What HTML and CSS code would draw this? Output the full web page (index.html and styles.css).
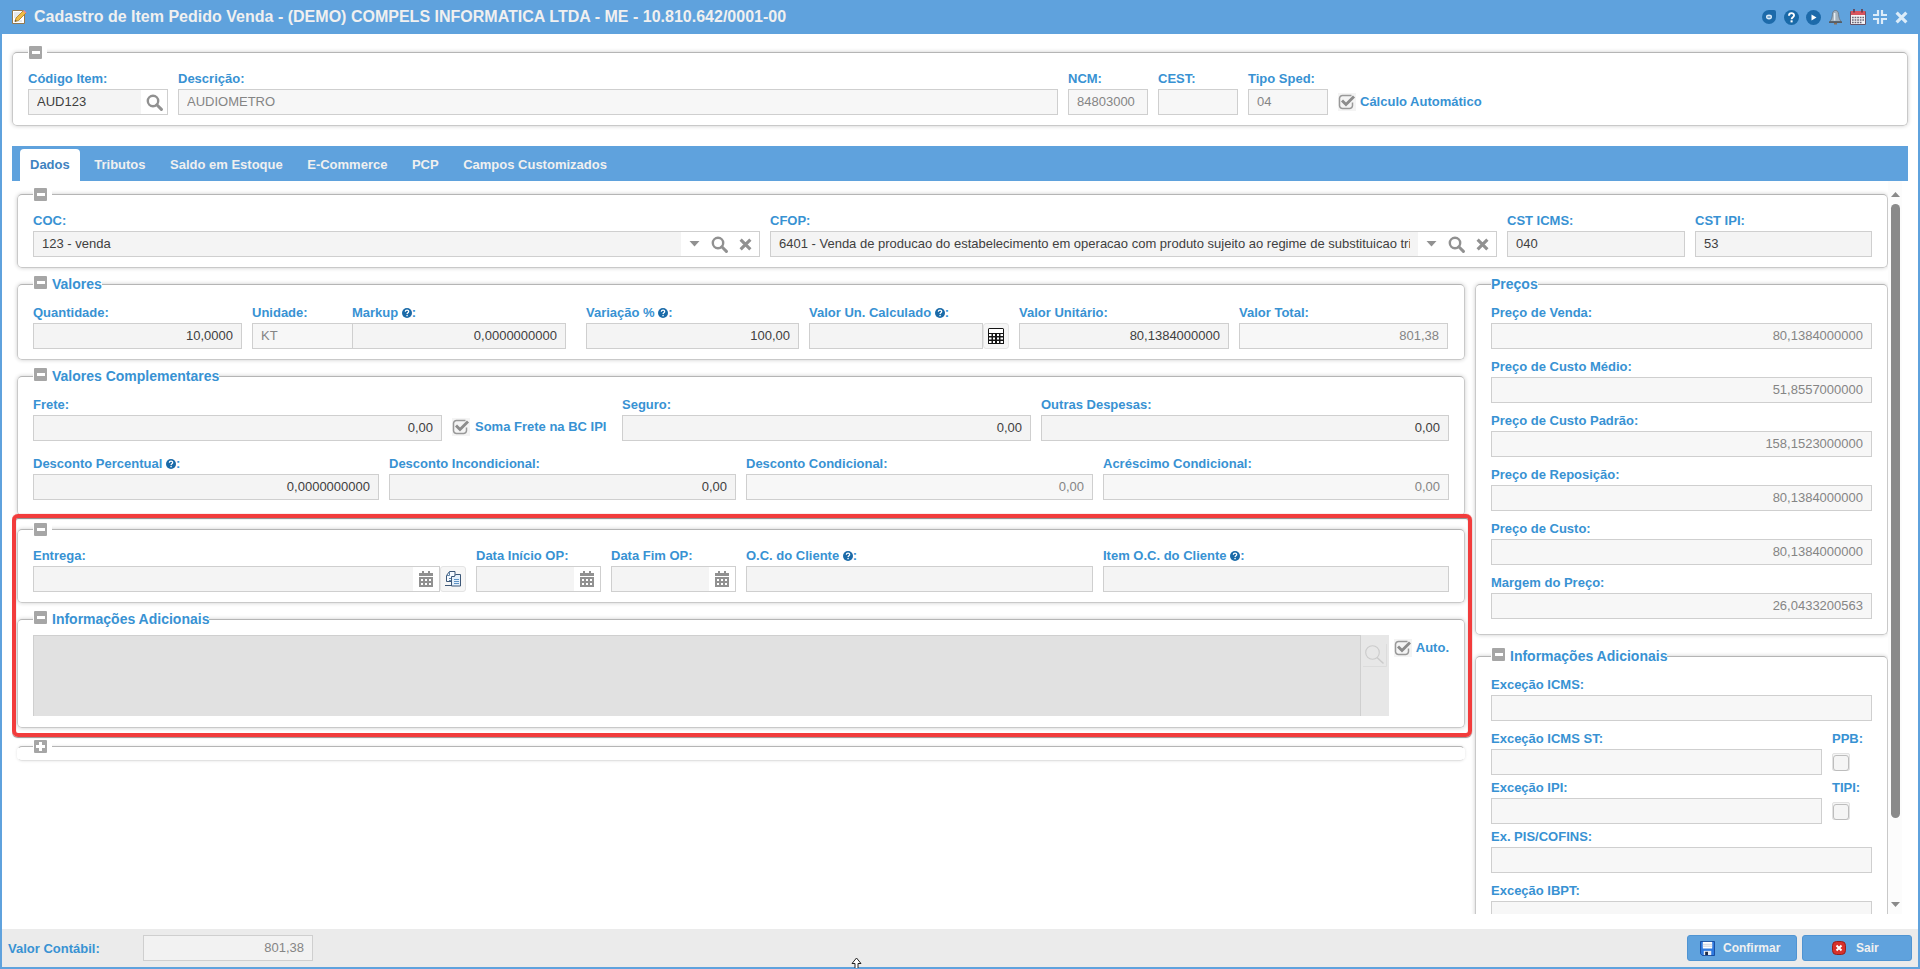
FILE: index.html
```html
<!DOCTYPE html>
<html lang="pt-BR">
<head>
<meta charset="utf-8">
<title>Cadastro de Item Pedido Venda</title>
<link rel="stylesheet" href="styles.css">
</head>
<body>
<svg class="sprite" width="0" height="0">
  <symbol id="search" viewBox="0 0 17 17"><circle cx="7" cy="7" r="5.2" fill="none" stroke="currentColor" stroke-width="2.4"/><path d="M10.8 10.8l4.6 4.6" stroke="currentColor" stroke-width="3" stroke-linecap="round"/></symbol>
  <symbol id="cross" viewBox="0 0 12 12"><path d="M1.500 1.500l9 9M10.500 1.500l-9 9" stroke="currentColor" stroke-width="2.9"/></symbol>
  <symbol id="caret" viewBox="0 0 10 6"><path d="M0 0h10L5 5.5z" fill="currentColor"/></symbol>
  <symbol id="date" viewBox="0 0 14 16"><path d="M3 0h2v2h4V0h2v2h3v3H0V2h3zM0 6h14v10H0z" fill="currentColor"/><path d="M2 8h2v2H2zM6 8h2v2H6zM10 8h2v2h-2zM2 12h2v2H2zM6 12h2v2H6zM10 12h2v2h-2z" fill="#fff"/></symbol>
  <symbol id="check" viewBox="0 0 18 18"><path d="M0 0h18v18H0z" fill="#f4f4f4"/><path d="M13.5 2.5h-9a3 3 0 0 0-3 3v7a3 3 0 0 0 3 3h7a3 3 0 0 0 3-3V9.500" fill="none" stroke="#999" stroke-width="1.5"/><path d="M4 7.500l4 4L16 3.500" fill="none" stroke="#8c8c8c" stroke-width="2.9"/></symbol>
  <symbol id="help" viewBox="0 0 16 16"><circle cx="8" cy="8" r="8" fill="#1a6aa8"/><path d="M5.300 6c0-3.600 5.600-3.400 5.400-.2C10.600 7.700 8.200 7.600 8.100 9.800" fill="none" stroke="#fff" stroke-width="2"/><path d="M7 11h2.200v2.200H7z" fill="#fff"/></symbol>
  <symbol id="calc" viewBox="0 0 16 16"><path d="M0 1.500A1.500 1.500 0 0 1 1.500 0h13A1.500 1.500 0 0 1 16 1.500V16H0z" fill="#151515"/><path d="M1 1h14v4H1zM1 6h2.500v2H1zM5 6h2v2H5zM9 6h2v2H9zM12.500 6H15v2h-2.500zM1 9.500h2.500v2H1zM5 9.500h2v2H5zM9 9.500h2v2H9zM12.500 9.500H15v2h-2.500zM1 13h2.500v2H1zM5 13h2v2H5zM9 13h2v2H9zM12.500 13H15v2h-2.500z" fill="#fff"/></symbol>
  <symbol id="docs" viewBox="0 0 16 16"><path d="M4.500.5H10v10H1.500V4.500z" fill="#f5faff" stroke="#3d5878"/><path d="M0 14.500h7" stroke="#3d5878"/><path d="M4.500.5v4h-3M4 7.500h3M4 9.500h3" fill="none" stroke="#5f83a8"/><path d="M6.500 5.500v9.500h9V3.500h-5l-1 2z" fill="#e4f0fb" stroke="#3d5878"/><path d="M9 8.500h5M9 10.500h5M9 12.500h5" stroke="#5f93c4"/></symbol>
</svg>

<div class="window">
  <header class="titlebar">
    <svg class="edit" width="16" height="16" viewBox="0 0 16 16"><path d="M1.500 1.500h10l2 2v11h-12z" fill="#fff" stroke="#92784f"/><path d="M3 4h6M3 6h5M3 8h3M3 12h8" stroke="#ccd3da"/><path d="M4 12.500l1-3.500 7.500-7.500 2.500 2.500-7.500 7.500z" fill="#f0bd45" stroke="#a87820" stroke-width=".8"/><path d="M12.500 1.500l2.500 2.500" stroke="#e4889a" stroke-width="1.600"/><path d="M4 12.500l.5-1.600 1.100 1.100z" fill="#333"/></svg>
    <h1>Cadastro de Item Pedido Venda - (DEMO) COMPELS INFORMATICA LTDA - ME - 10.810.642/0001-00</h1>
    <div class="tools">
      <svg width="14" height="14" viewBox="0 0 14 14"><path d="M7 0h5a2 2 0 0 1 2 2v5A7 7 0 1 1 7 0z" fill="#1d6aaa"/><ellipse cx="7" cy="7" rx="3" ry="2.400" fill="#dcecf9"/><path d="M5.500 7h3" stroke="#1d6aaa"/></svg>
      <svg class="t-help" width="15" height="15"><use href="#help"/></svg>
      <svg class="t-play" width="15" height="15" viewBox="0 0 15 15"><circle cx="7.500" cy="7.500" r="7.500" fill="#1d6aaa"/><path d="M5.500 4.500l5 3-5 3z" fill="#fff"/></svg>
      <svg class="t-bell" width="13" height="15" viewBox="0 0 13 15"><path d="M6.500.5C4.500.5 3.600 2 3.400 4.500 3.200 8 2.300 9.500 1 11.500h11C10.700 9.500 9.800 8 9.600 4.500 9.400 2 8.500.5 6.500.5z" fill="#a3b3c0" stroke="#66727d" stroke-width=".8"/><path d="M5.600 3v7.500" stroke="#e8eff4" stroke-width="1.500"/><path d="M0 11.300h13v1.700H0z" fill="#555c64"/><path d="M5 13h3v1.500H5z" fill="#8e6f54"/></svg>
      <svg class="t-cal" width="16" height="16" viewBox="0 0 16 16"><path d="M.5 2.500h15v13H.5z" fill="#f4f3f6" stroke="#665266"/><path d="M1 2h14v4H1z" fill="#d9545e"/><path d="M4 0v3.500M12 0v3.500" stroke="#5d3444" stroke-width="1.500"/><path d="M2 8.500h12M2 11h12M2 13.500h10" stroke="#6b6677" stroke-width="1.500" stroke-dasharray="1.700 .9"/></svg>
      <svg class="t-min" width="14" height="14" viewBox="0 0 14 14"><path d="M5 0v5H0M9 0v5h5M0 9h5v5M14 9H9v5" fill="none" stroke="#dcecf9" stroke-width="2.200"/></svg>
      <svg class="t-close" width="13" height="13"><use href="#cross"/></svg>
    </div>
  </header>

  <main class="content">
    <fieldset class="fs">
      <legend><i class="tog"></i></legend>
      <div class="row">
        <div class="field w140"><label>Código Item:</label><div class="inp"><span>AUD123</span><b class="trg"><svg width="17" height="17"><use href="#search"/></svg></b></div></div>
        <div class="field w880"><label>Descrição:</label><div class="inp ro"><span>AUDIOMETRO</span></div></div>
        <div class="field w80"><label>NCM:</label><div class="inp ro"><span>84803000</span></div></div>
        <div class="field w80"><label>CEST:</label><div class="inp ro"></div></div>
        <div class="field w80"><label>Tipo Sped:</label><div class="inp ro"><span>04</span></div></div>
        <div class="chk calcauto"><svg width="18" height="18"><use href="#check"/></svg><label>Cálculo Automático</label></div>
      </div>
    </fieldset>

    <nav class="tabs"><a class="on">Dados</a><a>Tributos</a><a>Saldo em Estoque</a><a>E-Commerce</a><a>PCP</a><a>Campos Customizados</a></nav>

    <div class="scroll">
      <div class="inner">
        <fieldset class="fs">
          <legend><i class="tog"></i></legend>
          <div class="row">
            <div class="field w727"><label>COC:</label><div class="inp"><span>123 - venda</span><b class="trg wide"><svg class="car" width="11" height="6"><use href="#caret"/></svg><svg width="17" height="17"><use href="#search"/></svg><svg width="13" height="13"><use href="#cross"/></svg></b></div></div>
            <div class="field w727"><label>CFOP:</label><div class="inp"><span>6401 - Venda de producao do estabelecimento em operacao com produto sujeito ao regime de substituicao tri</span><b class="trg wide"><svg class="car" width="11" height="6"><use href="#caret"/></svg><svg width="17" height="17"><use href="#search"/></svg><svg width="13" height="13"><use href="#cross"/></svg></b></div></div>
            <div class="field w178"><label>CST ICMS:</label><div class="inp"><span>040</span></div></div>
            <div class="field grow"><label>CST IPI:</label><div class="inp"><span>53</span></div></div>
          </div>
        </fieldset>

        <div class="cols">
          <section class="left">
            <fieldset class="fs named">
              <legend><i class="tog"></i>Valores</legend>
              <div class="row">
                <div class="field w209"><label>Quantidade:</label><div class="inp num"><span>10,0000</span></div></div>
                <div class="field pair w314">
                  <div class="field w100"><label>Unidade:</label><div class="inp ro"><span>KT</span></div></div>
                  <div class="field grow"><label>Markup <svg class="q"><use href="#help"/></svg>:</label><div class="inp num"><span>0,0000000000</span></div></div>
                </div>
                <div class="field w213 shift"><label>Variação % <svg class="q"><use href="#help"/></svg>:</label><div class="inp num"><span>100,00</span></div></div>
                <div class="field w200"><label>Valor Un. Calculado <svg class="q"><use href="#help"/></svg>:</label><div class="withbtn"><div class="inp"></div><button class="sq"><svg width="16" height="16"><use href="#calc"/></svg></button></div></div>
                <div class="field w210"><label>Valor Unitário:</label><div class="inp num"><span>80,1384000000</span></div></div>
                <div class="field w209"><label>Valor Total:</label><div class="inp ro num"><span>801,38</span></div></div>
              </div>
            </fieldset>

            <fieldset class="fs named tall">
              <legend><i class="tog"></i>Valores Complementares</legend>
              <div class="row">
                <div class="field w409"><label>Frete:</label><div class="inp num"><span>0,00</span></div></div>
                <div class="chk frete"><svg width="18" height="18"><use href="#check"/></svg><label>Soma Frete na BC IPI</label></div>
                <div class="field w409"><label>Seguro:</label><div class="inp num"><span>0,00</span></div></div>
                <div class="field grow"><label>Outras Despesas:</label><div class="inp num"><span>0,00</span></div></div>
              </div>
              <div class="row second">
                <div class="field w346"><label>Desconto Percentual <svg class="q"><use href="#help"/></svg>:</label><div class="inp num"><span>0,0000000000</span></div></div>
                <div class="field w347"><label>Desconto Incondicional:</label><div class="inp num"><span>0,00</span></div></div>
                <div class="field w347"><label>Desconto Condicional:</label><div class="inp ro num"><span>0,00</span></div></div>
                <div class="field grow"><label>Acréscimo Condicional:</label><div class="inp ro num"><span>0,00</span></div></div>
              </div>
            </fieldset>

            <fieldset class="fs delivery">
              <legend><i class="tog"></i></legend>
              <div class="row">
                <div class="field w433"><label>Entrega:</label><div class="withbtn"><div class="inp"><b class="trg"><svg width="14" height="16"><use href="#date"/></svg></b></div><button class="sq"><svg width="16" height="16"><use href="#docs"/></svg></button></div></div>
                <div class="field w125"><label>Data Início OP:</label><div class="inp"><b class="trg"><svg width="14" height="16"><use href="#date"/></svg></b></div></div>
                <div class="field w125"><label>Data Fim OP:</label><div class="inp"><b class="trg"><svg width="14" height="16"><use href="#date"/></svg></b></div></div>
                <div class="field w347"><label>O.C. do Cliente <svg class="q"><use href="#help"/></svg>:</label><div class="inp"></div></div>
                <div class="field grow"><label>Item O.C. do Cliente <svg class="q"><use href="#help"/></svg>:</label><div class="inp"></div></div>
              </div>
            </fieldset>

            <fieldset class="fs notes">
              <legend><i class="tog up"></i>Informações Adicionais</legend>
              <div class="noterow">
                <div class="area"></div>
                <div class="areabtn"><svg width="24" height="24" viewBox="0 0 24 24"><path d="M0 23.500h23.500V1" fill="none" stroke="#dcdcdc"/><circle cx="9.500" cy="9.500" r="6.800" fill="none" stroke="#cbcbcb" stroke-width="1.100"/><path d="M14 14.500l6.500 6" stroke="#cbcbcb" stroke-width="1.500"/></svg></div>
                <div class="chk auto"><svg width="18" height="18"><use href="#check"/></svg><label>Auto.</label></div>
              </div>
            </fieldset>

            <fieldset class="fs closed"><legend><i class="tog plus"></i></legend></fieldset>
            <div class="highlight"></div>
          </section>

          <section class="right">
            <fieldset class="fs named prices">
              <legend class="plain">Preços</legend>
              <div class="stack">
                <div class="field"><label>Preço de Venda:</label><div class="inp ro num"><span>80,1384000000</span></div></div>
                <div class="field"><label>Preço de Custo Médio:</label><div class="inp ro num"><span>51,8557000000</span></div></div>
                <div class="field"><label>Preço de Custo Padrão:</label><div class="inp ro num"><span>158,1523000000</span></div></div>
                <div class="field"><label>Preço de Reposição:</label><div class="inp ro num"><span>80,1384000000</span></div></div>
                <div class="field"><label>Preço de Custo:</label><div class="inp ro num"><span>80,1384000000</span></div></div>
                <div class="field"><label>Margem do Preço:</label><div class="inp ro num"><span>26,0433200563</span></div></div>
              </div>
            </fieldset>
            <fieldset class="fs named extra">
              <legend><i class="tog"></i>Informações Adicionais</legend>
              <div class="stack">
                <div class="field"><label>Exceção ICMS:</label><div class="inp ro"></div></div>
                <div class="row">
                  <div class="field w331"><label>Exceção ICMS ST:</label><div class="inp ro"></div></div>
                  <div class="field"><label>PPB:</label><i class="box"></i></div>
                </div>
                <div class="row near">
                  <div class="field w331"><label>Exceção IPI:</label><div class="inp ro"></div></div>
                  <div class="field"><label>TIPI:</label><i class="box"></i></div>
                </div>
                <div class="field near"><label>Ex. PIS/COFINS:</label><div class="inp ro"></div></div>
                <div class="field"><label>Exceção IBPT:</label><div class="inp ro"></div></div>
              </div>
            </fieldset>
          </section>
        </div>
      </div>
      <div class="bar">
        <svg width="9" height="5" viewBox="0 0 9 5"><path d="M0 5h9L4.500 0z" fill="#8a8a8a"/></svg>
        <div class="thumb"></div>
        <svg class="down" width="9" height="5" viewBox="0 0 9 5"><path d="M0 0h9L4.500 5z" fill="#8a8a8a"/></svg>
      </div>
    </div>
  </main>

  <footer class="foot">
    <label>Valor Contábil:</label>
    <div class="inp ro num total"><span>801,38</span></div>
    <button class="btn confirm"><svg width="15" height="15" viewBox="0 0 16 16"><path d="M.5.5h15v15h-13l-2-2z" fill="#2f7ae0" stroke="#164a9c"/><path d="M3 1h10v7H3z" fill="#fff"/><path d="M3 3.500h10M3 5.500h10" stroke="#c6cedb"/><path d="M4 10.500h8V15H4z" fill="#e9eef5"/><path d="M5.500 11.500h3V15h-3z" fill="#1c2b45"/></svg>Confirmar</button>
    <button class="btn exit"><svg width="14" height="14" viewBox="0 0 14 14"><rect x=".5" y=".5" width="13" height="13" rx="4" fill="#d9312a" stroke="#96201c"/><path d="M4.500 4.500l5 5M9.500 4.500l-5 5" stroke="#fff" stroke-width="2"/></svg>Sair</button>
  </footer>
  <svg class="cursor" width="11" height="11" viewBox="0 0 11 11"><path d="M5.500 1L10 6.500H7V12H4V6.500H1z" fill="#fff" stroke="#222"/></svg>
</div>
</body>
</html>
```

FILE: styles.css
```css
* { box-sizing: border-box; }
body { margin: 0; font: 13px "Liberation Sans", Arial, sans-serif; background: #fff; overflow: hidden; }
.sprite { position: absolute; }
svg { display: block; flex: none; }
label { font-weight: bold; color: #3892d3; white-space: nowrap; }
button { font: bold 12px "Liberation Sans", Arial, sans-serif; padding: 0; }

.window { position: relative; width: 1920px; height: 969px; display: flex; flex-direction: column; border: 2px solid #5fa2dd; border-top: 0; }

.titlebar { height: 34px; flex: none; margin: 0 -2px; padding: 0 12px 0 11px; display: flex; align-items: center; background: #5fa2dd; }
.titlebar h1 { margin: 0 0 0 7px; font-size: 16px; line-height: 33px; height: 34px; letter-spacing: .01px; color: #f0f0f0; white-space: nowrap; }
.tools { margin-left: auto; display: flex; align-items: center; color: #dcecf9; }
.t-help { margin-left: 8px; }
.t-play { margin-left: 7px; }
.t-bell { margin-left: 8px; }
.t-cal { margin-left: 8px; }
.t-min { margin-left: 7px; }
.t-close { margin-left: 8px; }

.content { flex: 1; min-height: 0; padding: 10px 10px 0; display: flex; flex-direction: column; }

.fs { margin: 0; min-width: 0; padding: 10px 15px; border: 1px solid #c9c9c9; border-top-color: #b5b5b5; border-radius: 5px; box-shadow: 0 0 4px rgba(0, 0, 0, .2); background: #fff; }
.fs.named { padding-top: 12px; }
.fs.tall, .fs.prices { padding-bottom: 15px; }
legend { display: flex; align-items: center; height: 17px; padding: 0 0 0 1px; font-size: 14px; font-weight: bold; line-height: 17px; color: #3892d3; background: #fff; white-space: nowrap; }
legend.plain { padding: 0; }
.tog { width: 13px; height: 13px; margin-right: 5px; border-radius: 1px; background: linear-gradient(#fff, #fff) center / 8px 3px no-repeat #a6a6a6; }
.named .tog, .tog.up { margin-top: -4px; }
.tog.plus { background: linear-gradient(#fff, #fff) center / 9px 3px no-repeat, linear-gradient(#fff, #fff) center / 3px 9px no-repeat #a6a6a6; }

.row { display: flex; gap: 10px; }
.row.second { margin-top: 15px; }
.stack { display: flex; flex-direction: column; gap: 10px; }
.near { margin-top: -5px; }
.field { display: flex; flex-direction: column; flex: none; }
.field.grow { flex: 1; min-width: 0; }
.field > label { height: 18px; padding-bottom: 3px; line-height: 15px; display: flex; align-items: center; white-space: pre; }
.field.pair { flex-direction: row; }
.field.pair .grow { margin-left: -1px; }
.q { width: 10px; height: 10px; }
.inp { height: 26px; display: flex; border: 1px solid #cfcfcf; background: #f4f4f4; color: #404040; line-height: 23px; overflow: hidden; }
.inp span { flex: 1; min-width: 0; margin: 0 8px; overflow: hidden; white-space: nowrap; }
.inp.ro { background: #f7f7f7; color: #858585; }
.inp.num { text-align: right; }
.trg { width: 26px; margin-left: auto; flex: none; display: flex; align-items: center; justify-content: center; background: #fff; color: #919191; }
.trg.wide { width: 78px; justify-content: flex-start; gap: 10px; padding-left: 8px; }
.trg.wide .car { margin-right: 1px; }
.trg.wide svg:last-child { margin-left: 1px; }
.withbtn { display: flex; }
.withbtn .inp { flex: 1; }
.sq { width: 26px; height: 26px; display: flex; align-items: center; justify-content: center; border: 1px solid #e4e4e4; border-radius: 3px; background: #f6f6f6; }
.chk { display: flex; gap: 4px; height: 18px; flex: none; }
.chk label { line-height: 18px; }
.calcauto { margin-top: 22px; }
.frete { margin-top: 21px; width: 160px; gap: 5px; }
.box { width: 18px; height: 18px; margin-top: 4px; border: 1px solid #e2e2e2; border-radius: 2px; background: #f5f5f5; display: flex; }
.box::before { content: ""; margin: 1px 0; width: 14px; height: 14px; border: 1px solid #bdbdbd; border-radius: 3px; }

.w80 { width: 80px; }
.w100 { width: 101px; }
.w125 { width: 125px; }
.w140 { width: 140px; }
.w178 { width: 178px; }
.w200 { width: 200px; }
.w209 { width: 209px; }
.w210 { width: 210px; }
.w213 { width: 213px; }
.w314 { width: 314px; }
.w331 { width: 331px; }
.w346 { width: 346px; }
.w347 { width: 347px; }
.w409 { width: 409px; }
.w433 { width: 433px; }
.w727 { width: 727px; }
.w880 { width: 880px; }
.shift { margin-left: 10px; }

.tabs { height: 35px; flex: none; margin-top: 20px; padding: 3px 8px 0; display: flex; gap: 4.5px; background: #5fa2dd; }
.tabs a { padding: 0 10px; line-height: 31px; font-weight: bold; color: #f0f0f0; border-radius: 4px 4px 0 0; }
.tabs .on { background: #fff; color: #3f83c0; }

.scroll { display: flex; height: 733px; flex: none; overflow: hidden; }
.inner { width: 1876px; padding: 5px 0 0 5px; }
.cols { display: flex; gap: 10px; margin-top: 8px; }
.left { position: relative; width: 1448px; display: flex; flex-direction: column; gap: 8px; }
.delivery { margin-top: -3px; }
.fs.notes { padding: 7px 15px 11px; }
.noterow { display: flex; }
.area { width: 1328px; height: 81px; border: 1px solid #cfcfcf; border-bottom: 0; background: #e1e1e1; }
.areabtn { width: 28px; height: 81px; padding: 8px 0 0 2px; background: #e7e7e7; }
.chk.auto { margin: 4px 0 0 5px; }
.fs.closed { margin-top: 2px; padding: 0; height: 23px; border-left-color: transparent; border-right-color: transparent; border-bottom-color: #e2e2e2; box-shadow: 0 0 3px rgba(0, 0, 0, .12); }
.closed legend { margin-left: 15px; }
.highlight { position: absolute; left: -5px; top: 238px; width: 1460px; height: 223px; border: 4px solid #f23c3c; border-radius: 6px; box-shadow: 0 0 1px 0 #c55, inset 0 1px 1px #888, 0 1px 1px #999; }
.right { flex: 1; }
.extra { margin-top: 13px; }

.bar { width: 14px; padding: 11px 0 0; display: flex; flex-direction: column; align-items: center; background: #fcfcfc; }
.thumb { width: 9px; height: 614px; margin-top: 7px; border-radius: 5px; background: #8a8a8a; }
.down { margin-top: 84px; }

.foot { height: 38px; flex: none; padding: 0 6px; display: flex; align-items: center; background: #ebebeb; }
.foot .total { width: 170px; margin-left: 44px; background: #f2f2f2; }
.foot > label { width: 91px; }
.btn { width: 110px; height: 26px; display: flex; align-items: center; border: 1px solid #4f94d2; border-radius: 3px; background: #5fa2dd; color: #f0f0f0; }
.confirm { margin-left: auto; padding-left: 12px; gap: 8px; }
.exit { margin-left: 5px; padding-left: 29px; gap: 10px; }
.cursor { position: absolute; left: 849px; top: 957px; }
```
